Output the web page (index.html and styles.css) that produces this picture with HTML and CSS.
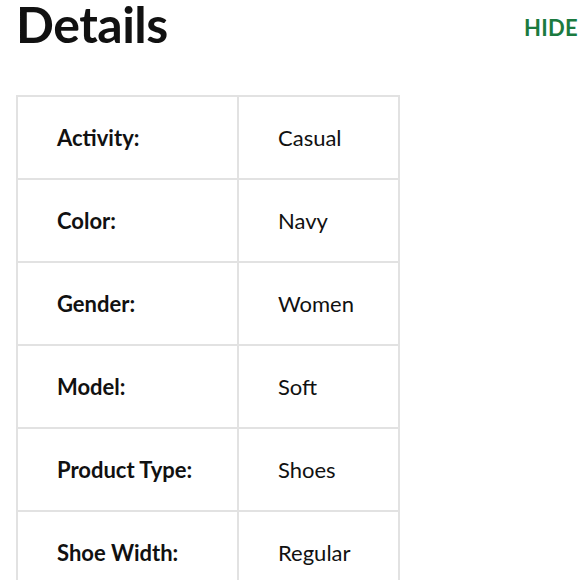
FILE: index.html
```html
<!DOCTYPE html>
<html>
<head>
<meta charset="utf-8">
<link rel="stylesheet" href="styles.css">
</head>
<body>
<div class="page">
  <div class="header">
    <h1 class="title">Details</h1>
    <a class="hide">HIDE</a>
  </div>
  <table class="details">
    <tr><td class="label">Activity:</td><td class="value">Casual</td></tr>
    <tr><td class="label">Color:</td><td class="value">Navy</td></tr>
    <tr><td class="label">Gender:</td><td class="value">Women</td></tr>
    <tr><td class="label">Model:</td><td class="value">Soft</td></tr>
    <tr><td class="label">Product Type:</td><td class="value">Shoes</td></tr>
    <tr><td class="label">Shoe Width:</td><td class="value">Regular</td></tr>
  </table>
</div>
</body>
</html>
```
FILE: styles.css
```css
html, body {
  margin: 0;
  padding: 0;
  background: #fff;
}
.page {
  font-family: Lato, "Open Sans", sans-serif;
  color: #111;
  padding: 0 0 0 16px;
}
.header {
  display: flex;
  justify-content: space-between;
  align-items: flex-start;
  height: 95px;
}
.title {
  margin: 0;
  font-size: 50px;
  font-weight: 700;
  line-height: 48px;
  letter-spacing: -0.5px;
}
.hide {
  font-size: 22px;
  font-weight: 700;
  color: #1b7a3f;
  margin-top: 14px;
  margin-right: 2px;
  letter-spacing: 0.3px;
}
.details {
  border-collapse: collapse;
  border: 2px solid #e2e2e2;
}
.details td {
  border: 2px solid #e2e2e2;
  height: 81px;
  padding: 0 0 0 39px;
  font-size: 22px;
  vertical-align: middle;
}
.details .label {
  width: 180px;
  font-weight: 700;
}
.details .value {
  width: 120px;
  font-weight: 400;
}
```
